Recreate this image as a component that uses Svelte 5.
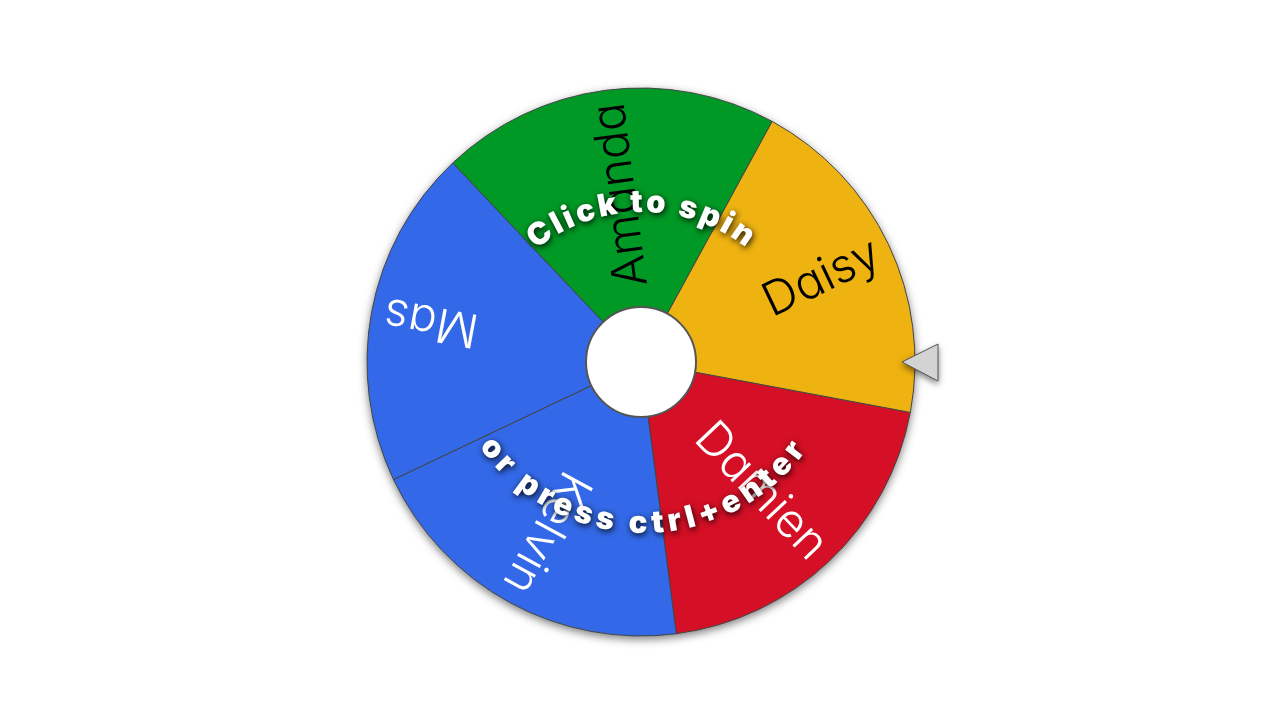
<script>
  const cx = 361;
  const cy = 362;
  const outer = 274;
  const hub = 55;
  const start = 10.6;

  const entries = [
    { name: 'Damien', fill: '#d50f25', ink: '#ffffff' },
    { name: 'Kelvin', fill: '#3369e8', ink: '#ffffff' },
    { name: 'Mas', fill: '#3369e8', ink: '#ffffff' },
    { name: 'Amanda', fill: '#009925', ink: '#000000' },
    { name: 'Daisy', fill: '#eeb211', ink: '#000000' }
  ];

  const step = 360 / entries.length;
  let turns = $state(0);

  function point(radius, degrees) {
    const a = (degrees * Math.PI) / 180;
    return `${cx + radius * Math.cos(a)} ${cy + radius * Math.sin(a)}`;
  }

  const slices = entries.map((entry, i) => {
    const from = start + i * step;
    const to = from + step;
    return {
      ...entry,
      middle: from + step / 2,
      d: `M${cx} ${cy} L${point(outer, from)} A${outer} ${outer} 0 0 1 ${point(outer, to)} Z`
    };
  });

  function spin() {
    turns += 3 + Math.random();
  }

  function onKey(event) {
    if (event.ctrlKey && event.key === 'Enter') spin();
  }
</script>

<svelte:window onkeydown={onKey} />

<main>
  <button type="button" onclick={spin}>
    <svg viewBox="0 0 720 720">
      <defs>
        <path id="upper-arc" d="M192 382 A170 170 0 0 1 532 382" />
        <path id="lower-arc" d="M164 333 A200 200 0 0 0 564 333" />
      </defs>

      <g class="disc">
        <g class="rotor" style:transform="rotate({turns * 360}deg)">
          {#each slices as slice}
            <path class="slice" d={slice.d} fill={slice.fill} />
          {/each}
          {#each slices as slice}
            <text
              class="name"
              x={cx + 261}
              y={cy + 16}
              fill={slice.ink}
              transform="rotate({slice.middle} {cx} {cy})">{slice.name}</text>
          {/each}
          <circle class="hub" {cx} {cy} r={hub} />
        </g>
      </g>

      <text class="caption upper"><textPath href="#upper-arc" startOffset="50%">Click to spin</textPath></text>
      <text class="caption lower"><textPath href="#lower-arc" startOffset="50%">or press ctrl+enter</textPath></text>

      <path class="pointer" d="M622 362 L658 344 V381 Z" />
    </svg>
  </button>
</main>

<style>
  :global(body) {
    margin: 0;
    background: #ffffff;
  }

  main {
    display: flex;
    justify-content: center;
    align-items: center;
    min-height: 100vh;
  }

  button {
    display: block;
    width: min(100vw, 100vh);
    padding: 0;
    border: 0;
    background: none;
    cursor: pointer;
  }

  svg {
    display: block;
    width: 100%;
    height: auto;
  }

  .disc {
    filter: drop-shadow(0 3px 4px rgba(0, 0, 0, 0.5));
  }

  .rotor {
    transform-origin: 361px 362px;
    transition: transform 4s ease-out;
  }

  .slice {
    stroke: #444444;
    stroke-width: 1px;
  }

  .hub {
    fill: #ffffff;
    stroke: #555555;
    stroke-width: 2px;
  }

  .name {
    font-family: Inter, Lato, sans-serif;
    font-size: 47px;
    font-weight: 350;
    font-feature-settings: 'cv11' 1;
    text-anchor: end;
  }

  .caption {
    font-family: 'Arial Black', Inter, sans-serif;
    font-size: 31px;
    font-weight: 900;
    fill: #ffffff;
    text-anchor: middle;
    filter: drop-shadow(1px 2px 3px rgba(0, 0, 0, 0.9));
  }

  .upper {
    letter-spacing: 3px;
  }

  .lower {
    letter-spacing: 5px;
  }

  .pointer {
    fill: #d3d3d3;
    stroke: #555555;
    stroke-width: 1px;
    filter: drop-shadow(0 3px 3px rgba(0, 0, 0, 0.5));
  }
</style>
